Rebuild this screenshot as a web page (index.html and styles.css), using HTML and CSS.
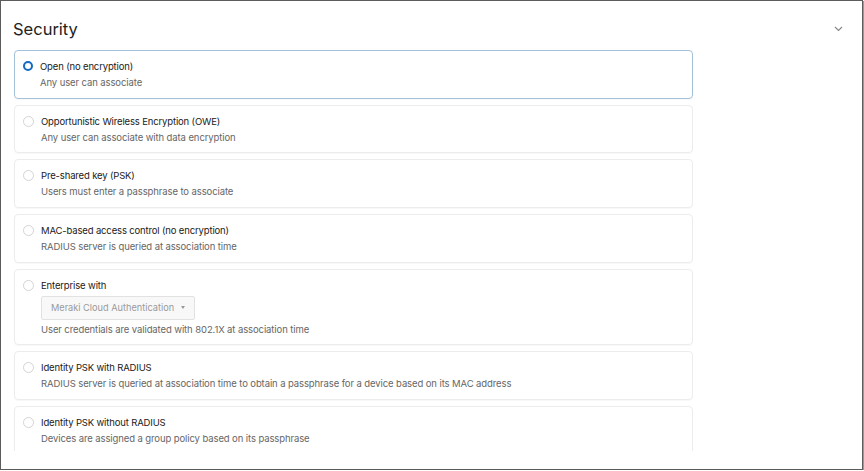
FILE: index.html
```html
<!DOCTYPE html>
<html lang="en">
<head>
    <meta charset="UTF-8">
    <meta name="viewport" content="width=device-width, initial-scale=1.0">
    <title>Security</title>
    <link rel="stylesheet" href="styles.css">
</head>
<body>
    <div class="frame">
        <div class="panel">
            <div class="panel-header">
                <h1>Security</h1>
                <svg class="chevron" width="9" height="6" viewBox="0 0 9 6"><path d="M1 1l3.5 3.5L8 1" fill="none" stroke="#888" stroke-width="1.2"/></svg>
            </div>

            <div class="options">
                <label class="option selected">
                    <span class="radio"></span>
                    <span class="option-body">
                        <span class="option-title">Open (no encryption)</span>
                        <span class="option-desc">Any user can associate</span>
                    </span>
                </label>

                <label class="option">
                    <span class="radio"></span>
                    <span class="option-body">
                        <span class="option-title">Opportunistic Wireless Encryption (OWE)</span>
                        <span class="option-desc">Any user can associate with data encryption</span>
                    </span>
                </label>

                <label class="option">
                    <span class="radio"></span>
                    <span class="option-body">
                        <span class="option-title">Pre-shared key (PSK)</span>
                        <span class="option-desc">Users must enter a passphrase to associate</span>
                    </span>
                </label>

                <label class="option">
                    <span class="radio"></span>
                    <span class="option-body">
                        <span class="option-title">MAC-based access control (no encryption)</span>
                        <span class="option-desc">RADIUS server is queried at association time</span>
                    </span>
                </label>

                <label class="option">
                    <span class="radio"></span>
                    <span class="option-body">
                        <span class="option-title">Enterprise with</span>
                        <span class="dropdown">Meraki Cloud Authentication <span class="caret"></span></span>
                        <span class="option-desc">User credentials are validated with 802.1X at association time</span>
                    </span>
                </label>

                <label class="option">
                    <span class="radio"></span>
                    <span class="option-body">
                        <span class="option-title">Identity PSK with RADIUS</span>
                        <span class="option-desc">RADIUS server is queried at association time to obtain a passphrase for a device based on its MAC address</span>
                    </span>
                </label>

                <label class="option">
                    <span class="radio"></span>
                    <span class="option-body">
                        <span class="option-title">Identity PSK without RADIUS</span>
                        <span class="option-desc">Devices are assigned a group policy based on its passphrase</span>
                    </span>
                </label>
            </div>
        </div>
    </div>
</body>
</html>
```

FILE: styles.css
```css
body {
    margin: 0;
    font-family: Inter, "Noto Sans", sans-serif;
    background-color: #ffffff;
    color: #222;
}

.frame {
    width: 861px;
    height: 468px;
    border: 1px solid #5c5c5c;
    box-shadow: 1px 1px 0 #9a9a9a;
    background-color: #ffffff;
}

.panel {
    height: 450px;
    overflow: hidden;
}

.panel-header {
    display: flex;
    justify-content: space-between;
    align-items: center;
    padding: 19px 19px 0 12px;
    height: 36px;
    box-sizing: border-box;
    margin-bottom: 13px;
}

h1 {
    margin: 0;
    font-size: 16.5px;
    font-weight: 400;
    color: #222;
}

.options {
    display: flex;
    flex-direction: column;
    gap: 6px;
    width: 679px;
    margin-left: 13px;
}

.option {
    display: flex;
    gap: 7px;
    padding: 9px 10px 7.7px 8px;
    border: 1px solid #ececec;
    border-radius: 4px;
    box-shadow: 0 1px 1px rgba(0, 0, 0, 0.03);
}

.option.selected {
    border-color: #a3c1d8;
}

.radio {
    width: 9px;
    height: 9px;
    margin-top: 1px;
    border: 1px solid #d4d4d4;
    border-radius: 50%;
    flex-shrink: 0;
}

.selected .radio {
    width: 6px;
    height: 6px;
    border: 2.5px solid #1469c2;
}

.option-body {
    display: flex;
    flex-direction: column;
    align-items: flex-start;
    gap: 2px;
}

.option-title {
    font-size: 9.5px;
    letter-spacing: -0.15px;
    line-height: 14px;
    color: #1a1a1a;
}

.option-desc {
    font-size: 9.5px;
    letter-spacing: -0.1px;
    line-height: 14px;
    color: #666;
}

.dropdown {
    display: flex;
    align-items: center;
    gap: 7px;
    margin: 1px 0 1px;
    height: 22px;
    padding: 0 9px;
    border: 1px solid #e2e2e2;
    border-radius: 2px;
    background-color: #f8f8f8;
    font-size: 9.2px;
    color: #9a9a9a;
}

.caret {
    border-left: 2.5px solid transparent;
    border-right: 2.5px solid transparent;
    border-top: 3px solid #999;
}
```
